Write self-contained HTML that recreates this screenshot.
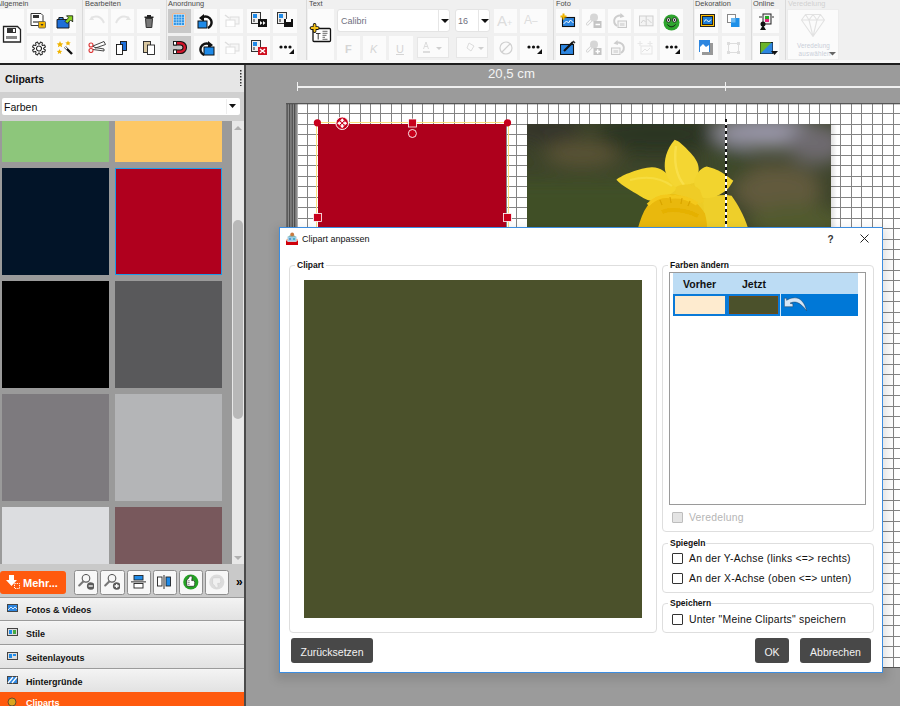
<!DOCTYPE html>
<html><head><meta charset="utf-8"><style>
html,body{margin:0;padding:0;}
body{width:900px;height:706px;overflow:hidden;position:relative;font-family:"Liberation Sans", sans-serif;background:#9b9b9b;}
div{box-sizing:border-box;}
.t{position:absolute;white-space:nowrap;line-height:1;}
</style></head><body>

<div style="position:absolute;left:0px;top:0px;width:900px;height:60px;background:#f0f0f0"></div>
<div style="position:absolute;left:0px;top:60px;width:900px;height:3px;background:#f7f7f7"></div>
<div style="position:absolute;left:0px;top:63px;width:900px;height:2px;background:#1e1e1e"></div>
<div style="position:absolute;left:82px;top:0px;width:1px;height:60px;background:#dadada"></div>
<div style="position:absolute;left:166px;top:0px;width:1px;height:60px;background:#dadada"></div>
<div style="position:absolute;left:306px;top:0px;width:1px;height:60px;background:#dadada"></div>
<div style="position:absolute;left:553px;top:0px;width:1px;height:60px;background:#dadada"></div>
<div style="position:absolute;left:693px;top:0px;width:1px;height:60px;background:#dadada"></div>
<div style="position:absolute;left:751px;top:0px;width:1px;height:60px;background:#dadada"></div>
<div style="position:absolute;left:785px;top:0px;width:1px;height:60px;background:#dadada"></div>
<div class="t" style="left:-4px;top:-0.2px;font-size:7.4px;color:#4a4a4a">Allgemein</div>
<div class="t" style="left:85px;top:-0.2px;font-size:7.4px;color:#4a4a4a">Bearbeiten</div>
<div class="t" style="left:168px;top:-0.2px;font-size:7.4px;color:#4a4a4a">Anordnung</div>
<div class="t" style="left:309px;top:-0.2px;font-size:7.4px;color:#4a4a4a">Text</div>
<div class="t" style="left:556px;top:-0.2px;font-size:7.4px;color:#4a4a4a">Foto</div>
<div class="t" style="left:695px;top:-0.2px;font-size:7.4px;color:#4a4a4a">Dekoration</div>
<div class="t" style="left:753px;top:-0.2px;font-size:7.4px;color:#4a4a4a">Online</div>
<div class="t" style="left:788px;top:-0.2px;font-size:7.4px;color:#d0d0d0">Veredelung</div>
<div style="position:absolute;left:0px;top:9px;width:24px;height:51px;background:#fbfbfb"></div>
<div style="position:absolute;left:27px;top:9px;width:23px;height:24px;background:#fbfbfb"></div>
<div style="position:absolute;left:27px;top:36px;width:23px;height:24px;background:#fbfbfb"></div>
<div style="position:absolute;left:53px;top:9px;width:23px;height:24px;background:#fbfbfb"></div>
<div style="position:absolute;left:53px;top:36px;width:23px;height:24px;background:#fbfbfb"></div>
<div style="position:absolute;left:85px;top:9px;width:23px;height:24px;background:#fbfbfb"></div>
<div style="position:absolute;left:85px;top:36px;width:23px;height:24px;background:#fbfbfb"></div>
<div style="position:absolute;left:111px;top:9px;width:23px;height:24px;background:#fbfbfb"></div>
<div style="position:absolute;left:111px;top:36px;width:23px;height:24px;background:#fbfbfb"></div>
<div style="position:absolute;left:137px;top:9px;width:23px;height:24px;background:#fbfbfb"></div>
<div style="position:absolute;left:137px;top:36px;width:23px;height:24px;background:#fbfbfb"></div>
<div style="position:absolute;left:168px;top:9px;width:23px;height:24px;background:#c8c8c8"></div>
<div style="position:absolute;left:168px;top:36px;width:23px;height:24px;background:#c8c8c8"></div>
<div style="position:absolute;left:194px;top:9px;width:23px;height:24px;background:#fbfbfb"></div>
<div style="position:absolute;left:194px;top:36px;width:23px;height:24px;background:#fbfbfb"></div>
<div style="position:absolute;left:220px;top:9px;width:23px;height:24px;background:#fbfbfb"></div>
<div style="position:absolute;left:220px;top:36px;width:23px;height:24px;background:#fbfbfb"></div>
<div style="position:absolute;left:247px;top:9px;width:23px;height:24px;background:#fbfbfb"></div>
<div style="position:absolute;left:247px;top:36px;width:23px;height:24px;background:#fbfbfb"></div>
<div style="position:absolute;left:273px;top:9px;width:24px;height:24px;background:#fbfbfb"></div>
<div style="position:absolute;left:273px;top:36px;width:24px;height:24px;background:#fbfbfb"></div>
<div style="position:absolute;left:308px;top:9px;width:26px;height:51px;background:#fbfbfb"></div>
<div style="position:absolute;left:337px;top:9px;width:113px;height:23px;background:#fff;border:1px solid #e4e4e4;border-radius:3px"></div>
<div style="position:absolute;left:438px;top:10px;width:1px;height:21px;background:#e6e6e6"></div>
<div class="t" style="left:341px;top:17px;font-size:9px;color:#6f7080">Calibri</div>
<div style="position:absolute;left:455px;top:9px;width:35px;height:23px;background:#fff;border:1px solid #e4e4e4;border-radius:3px"></div>
<div style="position:absolute;left:478px;top:10px;width:1px;height:21px;background:#e6e6e6"></div>
<div class="t" style="left:458px;top:17px;font-size:9px;color:#6f7080">16</div>
<div style="position:absolute;left:494px;top:9px;width:23px;height:24px;background:#fbfbfb"></div>
<div style="position:absolute;left:494px;top:36px;width:23px;height:24px;background:#fbfbfb"></div>
<div style="position:absolute;left:520px;top:9px;width:27px;height:24px;background:#fbfbfb"></div>
<div style="position:absolute;left:520px;top:36px;width:27px;height:24px;background:#fbfbfb"></div>
<div style="position:absolute;left:337px;top:36px;width:23px;height:24px;background:#fbfbfb"></div>
<div style="position:absolute;left:363px;top:36px;width:23px;height:24px;background:#fbfbfb"></div>
<div style="position:absolute;left:389px;top:36px;width:24px;height:24px;background:#fbfbfb"></div>
<div style="position:absolute;left:417px;top:37px;width:32px;height:21px;background:#fbfbfb;border:1px solid #e6e6e6"></div>
<div style="position:absolute;left:456px;top:37px;width:32px;height:21px;background:#fbfbfb;border:1px solid #e6e6e6"></div>
<div style="position:absolute;left:556px;top:9px;width:23px;height:24px;background:#fbfbfb"></div>
<div style="position:absolute;left:556px;top:36px;width:23px;height:24px;background:#fbfbfb"></div>
<div style="position:absolute;left:582px;top:9px;width:23px;height:24px;background:#fbfbfb"></div>
<div style="position:absolute;left:582px;top:36px;width:23px;height:24px;background:#fbfbfb"></div>
<div style="position:absolute;left:608px;top:9px;width:23px;height:24px;background:#fbfbfb"></div>
<div style="position:absolute;left:608px;top:36px;width:23px;height:24px;background:#fbfbfb"></div>
<div style="position:absolute;left:634px;top:9px;width:23px;height:24px;background:#fbfbfb"></div>
<div style="position:absolute;left:634px;top:36px;width:23px;height:24px;background:#fbfbfb"></div>
<div style="position:absolute;left:660px;top:9px;width:23px;height:24px;background:#fbfbfb"></div>
<div style="position:absolute;left:660px;top:36px;width:23px;height:24px;background:#fbfbfb"></div>
<div style="position:absolute;left:695px;top:9px;width:23px;height:24px;background:#fbfbfb"></div>
<div style="position:absolute;left:695px;top:36px;width:23px;height:24px;background:#fbfbfb"></div>
<div style="position:absolute;left:722px;top:9px;width:23px;height:24px;background:#fbfbfb"></div>
<div style="position:absolute;left:722px;top:36px;width:23px;height:24px;background:#fbfbfb"></div>
<div style="position:absolute;left:753px;top:9px;width:26px;height:24px;background:#fbfbfb"></div>
<div style="position:absolute;left:753px;top:36px;width:26px;height:24px;background:#fbfbfb"></div>
<div style="position:absolute;left:787px;top:9px;width:52px;height:51px;background:#fbfbfb;border:1px solid #ececec"></div>
<svg style="position:absolute;left:2px;top:24px;" width="20" height="20" viewBox="0 0 20 20"><path d="M1.5 2.5h14l3 3v12.5h-17z" fill="#fff" stroke="#222" stroke-width="1.3"/><rect x="5" y="4" width="9" height="5" fill="#333"/><rect x="11" y="5" width="2" height="3" fill="#fff"/><rect x="4" y="12" width="11" height="3" fill="#888"/></svg>
<svg style="position:absolute;left:30px;top:12px;" width="18" height="19" viewBox="0 0 18 19"><path d="M1 1.5h10l2 2v10h-12z" fill="#fff" stroke="#333" stroke-width="1"/><rect x="3" y="3" width="6" height="3" fill="#333"/><rect x="3" y="9" width="7" height="2" fill="#888"/><rect x="8.5" y="9.5" width="7" height="6.5" rx="1" fill="#f2b400" stroke="#555" stroke-width="0.8"/><path d="M10.5 12h3l-1.5 2z" fill="#333"/></svg>
<svg style="position:absolute;left:56px;top:15px;" width="18" height="14" viewBox="0 0 18 14"><path d="M1 4.5h2v-2h4v2h6v8.5h-12z" fill="#1e6fd9" stroke="#111" stroke-width="0.9"/><path d="M3 2.5h4v2h-4z" fill="#3d8ae6" stroke="#111" stroke-width="0.8"/><path d="M10.5 0.8h6.2v6.2l-2-2-3.5 3.5-2.2-2.2 3.5-3.5z" fill="#8ad420" stroke="#111" stroke-width="0.8"/></svg>
<svg style="position:absolute;left:30px;top:40px;" width="18" height="17" viewBox="0 0 18 17"><g transform="translate(9,8.5) rotate(22.5)"><path d="M4.39 -1.36 L6.52 -1.05 L6.52 1.05 L4.39 1.36 L4.07 2.15 L5.35 3.86 L3.86 5.35 L2.15 4.07 L1.36 4.39 L1.05 6.52 L-1.05 6.52 L-1.36 4.39 L-2.15 4.07 L-3.86 5.35 L-5.35 3.86 L-4.07 2.15 L-4.39 1.36 L-6.52 1.05 L-6.52 -1.05 L-4.39 -1.36 L-4.07 -2.15 L-5.35 -3.86 L-3.86 -5.35 L-2.15 -4.07 L-1.36 -4.39 L-1.05 -6.52 L1.05 -6.52 L1.36 -4.39 L2.15 -4.07 L3.86 -5.35 L5.35 -3.86 L4.07 -2.15Z" fill="#fff" stroke="#222" stroke-width="1" stroke-linejoin="round"/><circle r="2.5" fill="#fff" stroke="#222" stroke-width="1"/></g></svg>
<svg style="position:absolute;left:56px;top:40px;" width="18" height="16" viewBox="0 0 18 16"><path d="M9 7l7 7" stroke="#111" stroke-width="2.4"/><path d="M9 7l2 2" stroke="#fff" stroke-width="1.2"/><path d="M4 1l1 2.2 2.3.3-1.7 1.5.5 2.3-2.1-1.2-2.1 1.2.5-2.3L0.7 3.5 3 3.2z" fill="#f0b400"/><path d="M12 0.5l.8 1.8 1.9.2-1.4 1.2.4 1.9-1.7-1-1.7 1 .4-1.9-1.4-1.2 1.9-.2z" fill="#f0b400"/><path d="M3.5 9l.8 1.8 1.9.2-1.4 1.2.4 1.9-1.7-1-1.7 1 .4-1.9-1.4-1.2 1.9-.2z" fill="#f0b400"/></svg>
<svg style="position:absolute;left:88px;top:14px;" width="18" height="12" viewBox="0 0 18 12"><path d="M3 4c5-3 10-2 13 5" fill="none" stroke="#e4e4e4" stroke-width="2"/><path d="M1 6l3-4 2 4z" fill="#e4e4e4"/></svg>
<svg style="position:absolute;left:114px;top:14px;" width="18" height="12" viewBox="0 0 18 12"><path d="M15 4c-5-3-10-2-13 5" fill="none" stroke="#e4e4e4" stroke-width="2"/><path d="M17 6l-3-4-2 4z" fill="#e4e4e4"/></svg>
<svg style="position:absolute;left:144px;top:15px;" width="10" height="13" viewBox="0 0 10 13"><rect x="0.5" y="1.5" width="9" height="1.5" fill="#222"/><rect x="3" y="0" width="4" height="2" fill="#222"/><path d="M1.5 3.5h7l-.7 9h-5.6z" fill="#777" stroke="#222" stroke-width="0.9"/></svg>
<svg style="position:absolute;left:88px;top:41px;" width="18" height="12" viewBox="0 0 18 12"><circle cx="3" cy="4" r="2" fill="none" stroke="#d33" stroke-width="1.1"/><circle cx="3" cy="9.5" r="2" fill="none" stroke="#d33" stroke-width="1.1"/><path d="M5 5l11-4.5 1.5 3-10 3.5zM5 8.5l11 1.5v-2l-9-1.5" fill="#fff" stroke="#333" stroke-width="0.9"/></svg>
<svg style="position:absolute;left:116px;top:41px;" width="12" height="14" viewBox="0 0 12 14"><rect x="4.5" y="0.5" width="6" height="9" fill="#1e6fd9" stroke="#111" stroke-width="0.9"/><rect x="0.5" y="3.5" width="6" height="10" fill="#fff" stroke="#111" stroke-width="0.9"/></svg>
<svg style="position:absolute;left:143px;top:41px;" width="12" height="14" viewBox="0 0 12 14"><rect x="0.5" y="0.5" width="7" height="11" fill="#d9c7a0" stroke="#222" stroke-width="0.9"/><rect x="4.5" y="4" width="7" height="9.5" fill="#fff" stroke="#222" stroke-width="0.9"/></svg>
<svg style="position:absolute;left:172px;top:13px;" width="14" height="14" viewBox="0 0 14 14"><rect x="0.5" y="0.5" width="13" height="13" rx="1.5" fill="#bfe0f8" stroke="#f0b890" stroke-width="1"/><rect x="1.8" y="1.8" width="2.1" height="2.1" fill="#2f95e6"/><rect x="1.8" y="4.5" width="2.1" height="2.1" fill="#2f95e6"/><rect x="1.8" y="7.2" width="2.1" height="2.1" fill="#2f95e6"/><rect x="1.8" y="9.900000000000002" width="2.1" height="2.1" fill="#2f95e6"/><rect x="4.5" y="1.8" width="2.1" height="2.1" fill="#2f95e6"/><rect x="4.5" y="4.5" width="2.1" height="2.1" fill="#2f95e6"/><rect x="4.5" y="7.2" width="2.1" height="2.1" fill="#2f95e6"/><rect x="4.5" y="9.900000000000002" width="2.1" height="2.1" fill="#2f95e6"/><rect x="7.2" y="1.8" width="2.1" height="2.1" fill="#2f95e6"/><rect x="7.2" y="4.5" width="2.1" height="2.1" fill="#2f95e6"/><rect x="7.2" y="7.2" width="2.1" height="2.1" fill="#2f95e6"/><rect x="7.2" y="9.900000000000002" width="2.1" height="2.1" fill="#2f95e6"/><rect x="9.900000000000002" y="1.8" width="2.1" height="2.1" fill="#2f95e6"/><rect x="9.900000000000002" y="4.5" width="2.1" height="2.1" fill="#2f95e6"/><rect x="9.900000000000002" y="7.2" width="2.1" height="2.1" fill="#2f95e6"/><rect x="9.900000000000002" y="9.900000000000002" width="2.1" height="2.1" fill="#2f95e6"/></svg>
<svg style="position:absolute;left:172px;top:40px;" width="16" height="15" viewBox="0 0 16 15"><path d="M2 1.5h6.5a6 6 0 0 1 0 12h-6.5v-3.5h6.5a2.5 2.5 0 0 0 0-5h-6.5z" fill="#d4142a" stroke="#111" stroke-width="1.1"/><rect x="1.5" y="1.5" width="3" height="3.5" fill="#fff" stroke="#111" stroke-width="0.9"/><rect x="1.5" y="10" width="3" height="3.5" fill="#fff" stroke="#111" stroke-width="0.9"/></svg>
<svg style="position:absolute;left:197px;top:14px;" width="18" height="15" viewBox="0 0 18 15"><path d="M6 3a6 6 0 1 1 5 11" fill="none" stroke="#111" stroke-width="2.4"/><path d="M2 4l5-4v8z" fill="#111"/><rect x="1" y="7" width="9" height="7" fill="#1e8ae8" stroke="#111" stroke-width="1"/></svg>
<svg style="position:absolute;left:197px;top:41px;" width="18" height="15" viewBox="0 0 18 15"><path d="M12 3a6 6 0 1 0 -5 11" fill="none" stroke="#111" stroke-width="2.4"/><path d="M16 4l-5-4v8z" fill="#111"/><rect x="7" y="6" width="10" height="8" fill="#1e8ae8" stroke="#111" stroke-width="1"/></svg>
<svg style="position:absolute;left:224px;top:14px;" width="16" height="13" viewBox="0 0 16 13"><rect x="6" y="3" width="9" height="7" fill="#f6f6f6" stroke="#ddd"/><rect x="2" y="6" width="9" height="7" fill="#fff" stroke="#ddd"/><path d="M1 1l4 3" stroke="#ddd" stroke-width="1.5"/></svg>
<svg style="position:absolute;left:224px;top:41px;" width="16" height="13" viewBox="0 0 16 13"><rect x="6" y="3" width="9" height="7" fill="#f6f6f6" stroke="#ddd"/><rect x="2" y="6" width="9" height="7" fill="#fff" stroke="#ddd"/><path d="M1 1l4 3" stroke="#ddd" stroke-width="1.5"/></svg>
<svg style="position:absolute;left:251px;top:12px;" width="16" height="16" viewBox="0 0 16 16"><rect x="0.5" y="0.5" width="9" height="11" fill="#eee" stroke="#333"/><rect x="2" y="2" width="4" height="4" fill="#1e8ae8"/><rect x="2" y="7" width="2" height="3" fill="#888"/><rect x="7" y="7" width="9" height="8" fill="#111"/><path d="M9 9v4l2.5-2zM12 9v4l2.5-2z" fill="#fff"/></svg>
<svg style="position:absolute;left:277px;top:12px;" width="16" height="16" viewBox="0 0 16 16"><rect x="0.5" y="0.5" width="9" height="11" fill="#eee" stroke="#333"/><rect x="2" y="2" width="4" height="4" fill="#1e8ae8"/><rect x="2" y="7" width="2" height="3" fill="#888"/><rect x="7" y="7" width="9" height="8" fill="#111"/><rect x="9" y="7" width="5" height="3" fill="#fff"/></svg>
<svg style="position:absolute;left:251px;top:40px;" width="16" height="16" viewBox="0 0 16 16"><rect x="0.5" y="0.5" width="9" height="11" fill="#eee" stroke="#333"/><rect x="2" y="2" width="4" height="4" fill="#1e8ae8"/><rect x="2" y="7" width="2" height="3" fill="#888"/><rect x="7" y="7" width="9" height="8" fill="#d01020"/><path d="M9 9l5 4M14 9l-5 4" stroke="#fff" stroke-width="1.5"/></svg>
<svg style="position:absolute;left:279px;top:44px;" width="16" height="10" viewBox="0 0 16 10"><circle cx="2" cy="3" r="1.6" fill="#111"/><circle cx="6.5" cy="3" r="1.6" fill="#111"/><circle cx="11" cy="3" r="1.6" fill="#111"/><path d="M15 5v5h-5z" fill="#111"/></svg>
<svg style="position:absolute;left:527px;top:44px;" width="16" height="10" viewBox="0 0 16 10"><circle cx="2" cy="3" r="1.6" fill="#111"/><circle cx="6.5" cy="3" r="1.6" fill="#111"/><circle cx="11" cy="3" r="1.6" fill="#111"/><path d="M15 5v5h-5z" fill="#111"/></svg>
<svg style="position:absolute;left:665px;top:44px;" width="16" height="10" viewBox="0 0 16 10"><circle cx="2" cy="3" r="1.6" fill="#111"/><circle cx="6.5" cy="3" r="1.6" fill="#111"/><circle cx="11" cy="3" r="1.6" fill="#111"/><path d="M15 5v5h-5z" fill="#111"/></svg>
<svg style="position:absolute;left:309px;top:23px;" width="24" height="20" viewBox="0 0 24 20"><rect x="4" y="5.5" width="17.5" height="13" rx="1" fill="#fff" stroke="#111" stroke-width="1.3"/><path d="M7 10.5h4.5M9.2 10.5v6" stroke="#222" stroke-width="0.9"/><path d="M13.5 8.3h5M13.5 10.3h5M13.5 12.3h4M13.5 14.3h2.5M13.5 16.3h5" stroke="#444" stroke-width="0.8"/><path d="M5.6 1.9v6.4M2.4 5.1h6.4" stroke="#111" stroke-width="3.6" stroke-linecap="round"/><path d="M5.6 2.1v6M2.6 5.1h6" stroke="#f5c21a" stroke-width="2" stroke-linecap="round"/></svg>
<svg style="position:absolute;left:441px;top:18.5px;" width="8" height="5" viewBox="0 0 8 5"><path d="M0 0h8l-4 4z" fill="#111"/></svg>
<svg style="position:absolute;left:481px;top:18.5px;" width="8" height="5" viewBox="0 0 8 5"><path d="M0 0h8l-4 4z" fill="#111"/></svg>
<div class="t" style="left:497px;top:13px;font-size:15px;color:#ddd">A<span style="font-size:9px">+</span></div>
<div class="t" style="left:524px;top:14px;font-size:12px;color:#ddd">A<span style="font-size:10px">&#8211;</span></div>
<div class="t" style="left:345px;top:43.5px;font-size:11px;font-weight:bold;color:#d5d5d5">F</div>
<div class="t" style="left:370px;top:43.5px;font-size:11px;font-style:italic;color:#d5d5d5">K</div>
<div class="t" style="left:396px;top:43.5px;font-size:11px;text-decoration:underline;color:#d5d5d5">U</div>
<svg style="position:absolute;left:423px;top:41px;" width="26" height="14" viewBox="0 0 26 14"><path d="M3 1l-2.5 7M3 1l2.5 7M1.5 5.5h3" stroke="#d8d8d8" stroke-width="0.9" fill="none"/><rect x="0" y="10" width="7" height="2" fill="#ddd"/><path d="M13 6h6l-3 3z" fill="#cfcfcf"/></svg>
<svg style="position:absolute;left:466px;top:41px;" width="20" height="14" viewBox="0 0 20 14"><path d="M3 2l5 3-3 5-4-3z" fill="none" stroke="#dcdcdc" stroke-width="1"/><path d="M12 6h6l-3 3z" fill="#cfcfcf"/></svg>
<svg style="position:absolute;left:499px;top:41px;" width="14" height="14" viewBox="0 0 14 14"><circle cx="7" cy="7" r="6" fill="none" stroke="#d0d0d0" stroke-width="1.2"/><path d="M3 11l8-8" stroke="#d0d0d0" stroke-width="1.2"/></svg>
<svg style="position:absolute;left:560px;top:13px;" width="16" height="15" viewBox="0 0 16 15"><rect x="2.5" y="4.5" width="12" height="9" fill="#2d86e0" stroke="#111" stroke-width="1.1"/><path d="M3.5 11l3-3 2 2 2-3 3 3" stroke="#fff" stroke-width="1" fill="none"/><path d="M3.5 0.5v6M0.5 3.5h6" stroke="#f0b400" stroke-width="2"/></svg>
<svg style="position:absolute;left:560px;top:40px;" width="16" height="15" viewBox="0 0 16 15"><rect x="0.5" y="4.5" width="13" height="10" fill="#2d86e0" stroke="#111" stroke-width="1.1"/><path d="M4 11l9-9" stroke="#111" stroke-width="2.2"/><path d="M13 1l2 2" stroke="#333" stroke-width="1.4"/></svg>
<svg style="position:absolute;left:585px;top:13px;" width="18" height="17" viewBox="0 0 18 17"><path d="M6 7.5l-3.5 3.5" stroke="#cfcfcf" stroke-width="3" stroke-linecap="round"/><path d="M6 7.5l-3.5 3.5" stroke="#fafafa" stroke-width="1.6" stroke-linecap="round"/><circle cx="9" cy="4.5" r="4" fill="#d6d6d6"/><rect x="8.5" y="8" width="8" height="7" fill="#c4c4c4"/><path d="M10.5 11.5h4.5" stroke="#fff" stroke-width="1.5"/></svg>
<svg style="position:absolute;left:585px;top:40px;" width="18" height="17" viewBox="0 0 18 17"><path d="M6 7.5l-3.5 3.5" stroke="#cfcfcf" stroke-width="3" stroke-linecap="round"/><path d="M6 7.5l-3.5 3.5" stroke="#fafafa" stroke-width="1.6" stroke-linecap="round"/><circle cx="9" cy="4.5" r="4" fill="#d6d6d6"/><rect x="8.5" y="8" width="8" height="7" fill="#c4c4c4"/><path d="M12.7 9.2v4.6M10.5 11.5h4.5" stroke="#fff" stroke-width="1.5"/></svg>
<svg style="position:absolute;left:610px;top:12px;" width="18" height="18" viewBox="0 0 18 18"><path d="M12.5 4.2A5.5 5.5 0 1 0 7 14" fill="none" stroke="#cdcdcd" stroke-width="2"/><path d="M10.5 1l4 3.5-4.5 1.5z" fill="#cdcdcd"/><rect x="8" y="9" width="8.5" height="6.5" fill="#f4f4f4" stroke="#c8c8c8" stroke-width="1"/><rect x="10" y="11" width="4.5" height="3" fill="#ddd"/></svg>
<svg style="position:absolute;left:610px;top:39px;" width="18" height="18" viewBox="0 0 18 18"><path d="M5.5 4.2A5.5 5.5 0 1 1 11 14" fill="none" stroke="#cdcdcd" stroke-width="2"/><path d="M7.5 1l-4 3.5 4.5 1.5z" fill="#cdcdcd"/><rect x="1.5" y="9" width="8.5" height="6.5" fill="#f4f4f4" stroke="#c8c8c8" stroke-width="1"/><rect x="3.5" y="11" width="4.5" height="3" fill="#ddd"/></svg>
<svg style="position:absolute;left:638px;top:15px;" width="16" height="12" viewBox="0 0 16 12"><rect x="1.5" y="1" width="13.5" height="9.8" fill="#f4f4f4" stroke="#cfcfcf" stroke-width="1"/><path d="M8.2 1v9.8" stroke="#cfcfcf"/><path d="M3 8l2.5-3 2 2M9.5 4l4 4" stroke="#d2d2d2" fill="none"/></svg>
<svg style="position:absolute;left:637px;top:40px;" width="17" height="16" viewBox="0 0 17 16"><path d="M3 1v5M0.5 3.5h5M13 1v5M10.5 3.5h5" stroke="#e8e8e8" stroke-width="1.2"/><rect x="4" y="6" width="11" height="8" fill="none" stroke="#e6e6e6"/><path d="M5 12l3-3 2 2 3-3" stroke="#e4e4e4" fill="none"/></svg>
<svg style="position:absolute;left:663px;top:14px;" width="17" height="17" viewBox="0 0 17 17"><circle cx="8.5" cy="8.5" r="8" fill="#2ea52e"/><circle cx="5.5" cy="6" r="2.2" fill="#fff" stroke="#111" stroke-width="0.8"/><circle cx="11.5" cy="6" r="2.2" fill="#fff" stroke="#111" stroke-width="0.8"/><circle cx="5.5" cy="6" r="0.9" fill="#111"/><circle cx="11.5" cy="6" r="0.9" fill="#111"/><path d="M4.5 10.5c2 3 6 3 8 0" stroke="#111" stroke-width="1" fill="none"/></svg>
<svg style="position:absolute;left:700px;top:14px;" width="16" height="14" viewBox="0 0 16 14"><rect x="0.5" y="0.5" width="14" height="12" fill="#ffbf00" stroke="#222" stroke-width="1"/><rect x="2.5" y="2.5" width="10" height="8" fill="#1e7fd8" stroke="#222" stroke-width="1"/><path d="M4 7.5l2.2-2 2.5 2.5 2.3-2.5" stroke="#fff" stroke-width="1" fill="none"/></svg>
<svg style="position:absolute;left:726px;top:13px;" width="16" height="16" viewBox="0 0 16 16"><rect x="1.5" y="1.5" width="8" height="8" fill="#fff" stroke="#888"/><rect x="5" y="5" width="8.5" height="9" fill="#1e90e8"/><rect x="5" y="5" width="4.5" height="4.5" fill="#6cb8f0"/></svg>
<svg style="position:absolute;left:699px;top:40px;" width="14" height="15" viewBox="0 0 14 15"><rect x="3" y="3" width="11" height="12" fill="#999"/><rect x="0" y="0" width="11" height="12" fill="#2d86e0"/><path d="M1 7l3-3 3 3 3-2v7h-9z" fill="#fff"/></svg>
<svg style="position:absolute;left:726px;top:41px;" width="15" height="14" viewBox="0 0 15 14"><rect x="2.5" y="2.5" width="10" height="9" fill="none" stroke="#ddd"/><g fill="#ddd"><rect x="1" y="1" width="3" height="3"/><rect x="11" y="1" width="3" height="3"/><rect x="1" y="10" width="3" height="3"/><rect x="11" y="10" width="3" height="3"/></g></svg>
<svg style="position:absolute;left:758px;top:13px;" width="16" height="18" viewBox="0 0 16 18"><rect x="5" y="1" width="8" height="10" fill="#eee" stroke="#222"/><rect x="7" y="3" width="4" height="3" fill="#2a2"/><rect x="7" y="6" width="4" height="3" fill="#e2237a"/><circle cx="5" cy="11" r="2.5" fill="#111"/><path d="M2 17l3-5 3 5z" fill="#111"/><path d="M1 4h3M14 4h2" stroke="#333" stroke-width="1.2"/></svg>
<svg style="position:absolute;left:760px;top:42px;" width="18" height="15" viewBox="0 0 18 15"><rect x="0.5" y="0.5" width="12" height="11" fill="#2d86e0" stroke="#111"/><path d="M0.5 11.5l12-11v11z" fill="#2d86e0"/><path d="M0.5 0.5h11l-11 11z" fill="#6ab42a"/><path d="M11 9h7l-3.5 4z" fill="#111"/></svg>
<svg style="position:absolute;left:800px;top:13px;" width="26" height="25" viewBox="0 0 26 25"><path d="M5.5 1.5h15l4 5.5-11.5 16.5-11.5-16.5z M1.5 7h23 M5.5 1.5l3.5 5.5 4-5.5 4 5.5 3.5-5.5 M9 7l4 16.5 4-16.5" fill="none" stroke="#e2e2e2" stroke-width="1.1" stroke-linejoin="round"/></svg>
<div class="t" style="left:797px;top:42.8px;font-size:6.3px;letter-spacing:0.1px;color:#c9ced8">Veredelung</div>
<div class="t" style="left:798.5px;top:51px;font-size:6.3px;letter-spacing:0.25px;color:#c9ced8">auswählen</div>
<svg style="position:absolute;left:829px;top:52px;" width="7" height="4" viewBox="0 0 7 4"><path d="M0 0h7l-3.5 3.5z" fill="#666"/></svg>
<div style="position:absolute;left:0px;top:65px;width:244px;height:27px;background:#e6e6e6"></div>
<div class="t" style="left:5px;top:74.3px;font-size:10.5px;font-weight:bold;color:#111">Cliparts</div>
<svg style="position:absolute;left:239px;top:70px;" width="4" height="16" viewBox="0 0 4 16"><rect x="1" y="0" width="1.5" height="1.5" fill="#333"/><rect x="1" y="3" width="1.5" height="1.5" fill="#333"/><rect x="1" y="6" width="1.5" height="1.5" fill="#333"/><rect x="1" y="9" width="1.5" height="1.5" fill="#333"/><rect x="1" y="12" width="1.5" height="1.5" fill="#333"/><rect x="1" y="15" width="1.5" height="1.5" fill="#333"/></svg>
<div style="position:absolute;left:0px;top:92px;width:244px;height:29px;background:#d0d0d0"></div>
<div style="position:absolute;left:2px;top:98px;width:238px;height:17px;background:#fff;border-radius:2px"></div>
<div style="position:absolute;left:226px;top:99px;width:1px;height:15px;background:#eee"></div>
<div class="t" style="left:4px;top:101.5px;font-size:10.5px;color:#111">Farben</div>
<svg style="position:absolute;left:229px;top:104px;" width="7" height="4" viewBox="0 0 7 4"><path d="M0 0h7l-3.5 4z" fill="#111"/></svg>
<div style="position:absolute;left:0px;top:121px;width:232px;height:443px;background:#9a9a9a;overflow:hidden"></div>
<div style="position:absolute;left:2px;top:121px;width:107px;height:40.5px;background:#8dc67b;"></div>
<div style="position:absolute;left:115px;top:121px;width:107px;height:40.5px;background:#fdc865;"></div>
<div style="position:absolute;left:2px;top:168px;width:107px;height:107px;background:#021428;"></div>
<div style="position:absolute;left:115px;top:168px;width:107px;height:107px;background:#b0001e;border:1.5px solid #1e9be8;"></div>
<div style="position:absolute;left:2px;top:280.5px;width:107px;height:107.0px;background:#000000;"></div>
<div style="position:absolute;left:115px;top:280.5px;width:107px;height:107.0px;background:#59595b;"></div>
<div style="position:absolute;left:2px;top:393.5px;width:107px;height:107.0px;background:#7d7a7e;"></div>
<div style="position:absolute;left:115px;top:393.5px;width:107px;height:107.0px;background:#b4b5b7;"></div>
<div style="position:absolute;left:2px;top:507px;width:107px;height:57px;background:#dcdde0;"></div>
<div style="position:absolute;left:115px;top:507px;width:107px;height:57px;background:#78585c;"></div>
<div style="position:absolute;left:232px;top:121px;width:12px;height:443px;background:#e8e8e8"></div>
<div style="position:absolute;left:233px;top:220px;width:10px;height:199px;background:#b8b8b8;border-radius:5px"></div>
<svg style="position:absolute;left:234px;top:125px;" width="8" height="5" viewBox="0 0 8 5"><path d="M0 5l4-4 4 4z" fill="#b0b0b0"/></svg>
<svg style="position:absolute;left:234px;top:556px;" width="8" height="5" viewBox="0 0 8 5"><path d="M0 0l4 4 4-4z" fill="#b0b0b0"/></svg>
<div style="position:absolute;left:0px;top:564px;width:244px;height:34px;background:#c9c9c9"></div>
<div style="position:absolute;left:0px;top:571px;width:66px;height:23px;background:#ff5a0e;border-radius:3px"></div>
<svg style="position:absolute;left:6px;top:575px;" width="15" height="15" viewBox="0 0 15 15"><path d="M3 0h5v5h3l-5.5 6-5.5-6h3z" fill="#fff"/><rect x="8.5" y="8.5" width="5" height="5" fill="none" stroke="#fff" stroke-dasharray="1.2 1" stroke-width="1"/></svg>
<div class="t" style="left:23px;top:577.5px;font-size:11px;font-weight:bold;color:#fff">Mehr...</div>
<div style="position:absolute;left:73.5px;top:570px;width:24.5px;height:25px;background:#f7f7f7;border:1.5px solid #8e8e8e;border-radius:2.5px"></div>
<div style="position:absolute;left:100px;top:570px;width:24.5px;height:25px;background:#f7f7f7;border:1.5px solid #8e8e8e;border-radius:2.5px"></div>
<div style="position:absolute;left:126.5px;top:570px;width:24.5px;height:25px;background:#f7f7f7;border:1.5px solid #8e8e8e;border-radius:2.5px"></div>
<div style="position:absolute;left:152.5px;top:570px;width:24.5px;height:25px;background:#f7f7f7;border:1.5px solid #8e8e8e;border-radius:2.5px"></div>
<div style="position:absolute;left:178.5px;top:570px;width:24.5px;height:25px;background:#f7f7f7;border:1.5px solid #8e8e8e;border-radius:2.5px"></div>
<div style="position:absolute;left:204.5px;top:570px;width:24.5px;height:25px;background:#f7f7f7;border:1.5px solid #8e8e8e;border-radius:2.5px"></div>
<svg style="position:absolute;left:78px;top:574px;" width="16" height="16" viewBox="0 0 16 16"><circle cx="8" cy="4.3" r="3.8" fill="none" stroke="#5a5a5a" stroke-width="1.1"/><path d="M5.2 7.5l-4 4" stroke="#777" stroke-width="2" stroke-linecap="round"/><circle cx="12.7" cy="12" r="3.8" fill="#5a5a5a"/><path d="M10.6 12h4.2" stroke="#fff" stroke-width="1.3"/></svg>
<svg style="position:absolute;left:104px;top:574px;" width="16" height="16" viewBox="0 0 16 16"><circle cx="8" cy="4.3" r="3.8" fill="none" stroke="#5a5a5a" stroke-width="1.1"/><path d="M5.2 7.5l-4 4" stroke="#777" stroke-width="2" stroke-linecap="round"/><circle cx="12.7" cy="12" r="3.8" fill="#5a5a5a"/><path d="M10.6 12h4.2M12.7 9.9v4.2" stroke="#fff" stroke-width="1.3"/></svg>
<svg style="position:absolute;left:131px;top:575px;" width="15" height="14" viewBox="0 0 15 14"><rect x="3" y="0.5" width="9" height="4.5" fill="#1e8ae8" stroke="#222" stroke-width="0.9"/><rect x="3" y="8.5" width="9" height="4.5" fill="#fff" stroke="#222" stroke-width="0.9"/><rect x="0" y="6" width="15" height="1.6" fill="#777"/></svg>
<svg style="position:absolute;left:157px;top:575px;" width="15" height="14" viewBox="0 0 15 14"><rect x="0.5" y="2" width="4.5" height="9" fill="#fff" stroke="#222" stroke-width="0.9"/><rect x="9" y="2" width="4.5" height="9" fill="#1e8ae8" stroke="#222" stroke-width="0.9"/><rect x="6.2" y="0" width="1.6" height="14" fill="#777"/></svg>
<svg style="position:absolute;left:182px;top:574px;" width="17" height="17" viewBox="0 0 17 17"><circle cx="8.8" cy="8" r="7.6" fill="#24a124"/><path d="M8.5 2.2c1.2-.4 1.8.6 1.6 1.8l-.4 2.6h1.8c.8 0 1.2.7.9 1.4.6.3.6 1.2 0 1.5.5.4.4 1.2-.2 1.5.3.6-.1 1.3-.8 1.3h-4.6c-.9 0-1.6-.3-2.2-.8v-5.5c1.2-.6 2.3-1.8 2.9-3.8z" fill="#fff" stroke="#222" stroke-width="0.7"/><path d="M5.6 6.8h2.2M5.6 8.6h2.2M5.6 10.4h2" stroke="#222" stroke-width="0.5"/></svg>
<svg style="position:absolute;left:208px;top:574px;" width="17" height="17" viewBox="0 0 17 17"><circle cx="8.8" cy="8" r="7.6" fill="#dcdcdc"/><g transform="translate(0,16) scale(1,-1)"><path d="M8.5 2.2c1.2-.4 1.8.6 1.6 1.8l-.4 2.6h1.8c.8 0 1.2.7.9 1.4.6.3.6 1.2 0 1.5.5.4.4 1.2-.2 1.5.3.6-.1 1.3-.8 1.3h-4.6c-.9 0-1.6-.3-2.2-.8v-5.5c1.2-.6 2.3-1.8 2.9-3.8z" fill="#f0f0f0" stroke="#cfcfcf" stroke-width="0.7"/></g></svg>
<div class="t" style="left:236px;top:576px;font-size:12px;font-weight:bold;color:#000">&#187;</div>
<div style="position:absolute;left:0px;top:597px;width:244px;height:1px;background:#f6f6f6"></div>
<div style="position:absolute;left:0px;top:598px;width:244px;height:22px;background:linear-gradient(#f3f3f3,#e2e2e2)"></div>
<div style="position:absolute;left:0px;top:620px;width:244px;height:2px;background:#9b9b9b"></div>
<div class="t" style="left:26px;top:606px;font-size:9px;font-weight:bold;color:#111">Fotos &amp; Videos</div>
<div style="position:absolute;left:0px;top:621px;width:244px;height:1px;background:#f6f6f6"></div>
<div style="position:absolute;left:0px;top:622px;width:244px;height:22px;background:linear-gradient(#f3f3f3,#e2e2e2)"></div>
<div style="position:absolute;left:0px;top:644px;width:244px;height:2px;background:#9b9b9b"></div>
<div class="t" style="left:26px;top:630px;font-size:9px;font-weight:bold;color:#111">Stile</div>
<div style="position:absolute;left:0px;top:645px;width:244px;height:1px;background:#f6f6f6"></div>
<div style="position:absolute;left:0px;top:646px;width:244px;height:22px;background:linear-gradient(#f3f3f3,#e2e2e2)"></div>
<div style="position:absolute;left:0px;top:668px;width:244px;height:2px;background:#9b9b9b"></div>
<div class="t" style="left:26px;top:654px;font-size:9px;font-weight:bold;color:#111">Seitenlayouts</div>
<div style="position:absolute;left:0px;top:669px;width:244px;height:1px;background:#f6f6f6"></div>
<div style="position:absolute;left:0px;top:670px;width:244px;height:22px;background:linear-gradient(#f3f3f3,#e2e2e2)"></div>
<div style="position:absolute;left:0px;top:692px;width:244px;height:2px;background:#9b9b9b"></div>
<div class="t" style="left:26px;top:678px;font-size:9px;font-weight:bold;color:#111">Hintergründe</div>
<div style="position:absolute;left:0px;top:597px;width:244px;height:1px;background:#9b9b9b"></div>
<svg style="position:absolute;left:7px;top:604px;" width="11" height="8" viewBox="0 0 11 8"><rect x="0.5" y="0.5" width="10" height="7" fill="#2d86e0" stroke="#444"/><path d="M1 6l3-3 2 2 2-2 2 2" stroke="#fff" fill="none" stroke-width="0.8"/></svg>
<svg style="position:absolute;left:7px;top:628px;" width="11" height="8" viewBox="0 0 11 8"><rect x="0.5" y="0.5" width="10" height="7" fill="#ddd" stroke="#444"/><rect x="2" y="2" width="3" height="4" fill="#1e8ae8"/><rect x="6" y="2" width="3" height="4" fill="#4a4"/></svg>
<svg style="position:absolute;left:7px;top:652px;" width="11" height="8" viewBox="0 0 11 8"><rect x="0.5" y="0.5" width="10" height="7" fill="#ddd" stroke="#444"/><rect x="2" y="2" width="3" height="4" fill="#1e8ae8"/><rect x="6" y="2" width="3" height="2" fill="#1e8ae8"/></svg>
<svg style="position:absolute;left:7px;top:676px;" width="11" height="8" viewBox="0 0 11 8"><rect x="0.5" y="0.5" width="10" height="7" fill="#2d86e0" stroke="#444"/><path d="M1 7l5-6M5 7l5-6" stroke="#fff" stroke-width="1.3"/></svg>
<div style="position:absolute;left:0px;top:692px;width:244px;height:14px;background:#ff5a0e"></div>
<svg style="position:absolute;left:6px;top:697px;" width="12" height="9" viewBox="0 0 12 9"><circle cx="6" cy="5" r="4" fill="#d9a520" stroke="#333" stroke-width="0.7"/></svg>
<div class="t" style="left:26px;top:699px;font-size:9px;font-weight:bold;color:#fff">Cliparts</div>
<div style="position:absolute;left:244px;top:65px;width:2px;height:641px;background:#4a4a4a"></div>
<div class="t" style="left:488px;top:67px;font-size:13.2px;color:#f4f4f4">20,5 cm</div>
<div style="position:absolute;left:297px;top:86px;width:603px;height:2px;background:#f0f0f0"></div>
<div style="position:absolute;left:297px;top:82px;width:1px;height:9px;background:#f0f0f0"></div>
<div style="position:absolute;left:725px;top:82px;width:1px;height:9px;background:#f0f0f0"></div>
<svg style="position:absolute;left:286px;top:103px;" width="614" height="565" viewBox="0 0 614 565"><rect x="0" y="0" width="614" height="565" fill="#fff"/><rect x="21" y="0" width="1" height="565" fill="#838383"/><rect x="32" y="0" width="1" height="565" fill="#838383"/><rect x="42" y="0" width="1" height="565" fill="#838383"/><rect x="53" y="0" width="1" height="565" fill="#838383"/><rect x="63" y="0" width="1" height="565" fill="#838383"/><rect x="74" y="0" width="1" height="565" fill="#838383"/><rect x="84" y="0" width="1" height="565" fill="#838383"/><rect x="94" y="0" width="1" height="565" fill="#838383"/><rect x="105" y="0" width="1" height="565" fill="#838383"/><rect x="115" y="0" width="1" height="565" fill="#838383"/><rect x="126" y="0" width="1" height="565" fill="#838383"/><rect x="136" y="0" width="1" height="565" fill="#838383"/><rect x="147" y="0" width="1" height="565" fill="#838383"/><rect x="157" y="0" width="1" height="565" fill="#838383"/><rect x="168" y="0" width="1" height="565" fill="#838383"/><rect x="178" y="0" width="1" height="565" fill="#838383"/><rect x="189" y="0" width="1" height="565" fill="#838383"/><rect x="199" y="0" width="1" height="565" fill="#838383"/><rect x="209" y="0" width="1" height="565" fill="#838383"/><rect x="220" y="0" width="1" height="565" fill="#838383"/><rect x="230" y="0" width="1" height="565" fill="#838383"/><rect x="241" y="0" width="1" height="565" fill="#838383"/><rect x="251" y="0" width="1" height="565" fill="#838383"/><rect x="262" y="0" width="1" height="565" fill="#838383"/><rect x="272" y="0" width="1" height="565" fill="#838383"/><rect x="283" y="0" width="1" height="565" fill="#838383"/><rect x="293" y="0" width="1" height="565" fill="#838383"/><rect x="303" y="0" width="1" height="565" fill="#838383"/><rect x="314" y="0" width="1" height="565" fill="#838383"/><rect x="324" y="0" width="1" height="565" fill="#838383"/><rect x="335" y="0" width="1" height="565" fill="#838383"/><rect x="345" y="0" width="1" height="565" fill="#838383"/><rect x="356" y="0" width="1" height="565" fill="#838383"/><rect x="366" y="0" width="1" height="565" fill="#838383"/><rect x="377" y="0" width="1" height="565" fill="#838383"/><rect x="387" y="0" width="1" height="565" fill="#838383"/><rect x="398" y="0" width="1" height="565" fill="#838383"/><rect x="408" y="0" width="1" height="565" fill="#838383"/><rect x="418" y="0" width="1" height="565" fill="#838383"/><rect x="429" y="0" width="1" height="565" fill="#838383"/><rect x="439" y="0" width="1" height="565" fill="#838383"/><rect x="450" y="0" width="1" height="565" fill="#838383"/><rect x="460" y="0" width="1" height="565" fill="#838383"/><rect x="471" y="0" width="1" height="565" fill="#838383"/><rect x="481" y="0" width="1" height="565" fill="#838383"/><rect x="492" y="0" width="1" height="565" fill="#838383"/><rect x="502" y="0" width="1" height="565" fill="#838383"/><rect x="512" y="0" width="1" height="565" fill="#838383"/><rect x="523" y="0" width="1" height="565" fill="#838383"/><rect x="533" y="0" width="1" height="565" fill="#838383"/><rect x="544" y="0" width="1" height="565" fill="#838383"/><rect x="554" y="0" width="1" height="565" fill="#838383"/><rect x="565" y="0" width="1" height="565" fill="#838383"/><rect x="575" y="0" width="1" height="565" fill="#838383"/><rect x="586" y="0" width="1" height="565" fill="#838383"/><rect x="596" y="0" width="1" height="565" fill="#838383"/><rect x="607" y="0" width="1" height="565" fill="#838383"/><rect x="11" y="10" width="603" height="1" fill="#838383"/><rect x="11" y="21" width="603" height="1" fill="#838383"/><rect x="11" y="31" width="603" height="1" fill="#838383"/><rect x="11" y="42" width="603" height="1" fill="#838383"/><rect x="11" y="52" width="603" height="1" fill="#838383"/><rect x="11" y="62" width="603" height="1" fill="#838383"/><rect x="11" y="73" width="603" height="1" fill="#838383"/><rect x="11" y="83" width="603" height="1" fill="#838383"/><rect x="11" y="94" width="603" height="1" fill="#838383"/><rect x="11" y="104" width="603" height="1" fill="#838383"/><rect x="11" y="115" width="603" height="1" fill="#838383"/><rect x="11" y="125" width="603" height="1" fill="#838383"/><rect x="11" y="136" width="603" height="1" fill="#838383"/><rect x="11" y="146" width="603" height="1" fill="#838383"/><rect x="11" y="156" width="603" height="1" fill="#838383"/><rect x="11" y="167" width="603" height="1" fill="#838383"/><rect x="11" y="177" width="603" height="1" fill="#838383"/><rect x="11" y="188" width="603" height="1" fill="#838383"/><rect x="11" y="198" width="603" height="1" fill="#838383"/><rect x="11" y="209" width="603" height="1" fill="#838383"/><rect x="11" y="219" width="603" height="1" fill="#838383"/><rect x="11" y="230" width="603" height="1" fill="#838383"/><rect x="11" y="240" width="603" height="1" fill="#838383"/><rect x="11" y="251" width="603" height="1" fill="#838383"/><rect x="11" y="261" width="603" height="1" fill="#838383"/><rect x="11" y="271" width="603" height="1" fill="#838383"/><rect x="11" y="282" width="603" height="1" fill="#838383"/><rect x="11" y="292" width="603" height="1" fill="#838383"/><rect x="11" y="303" width="603" height="1" fill="#838383"/><rect x="11" y="313" width="603" height="1" fill="#838383"/><rect x="11" y="324" width="603" height="1" fill="#838383"/><rect x="11" y="334" width="603" height="1" fill="#838383"/><rect x="11" y="345" width="603" height="1" fill="#838383"/><rect x="11" y="355" width="603" height="1" fill="#838383"/><rect x="11" y="365" width="603" height="1" fill="#838383"/><rect x="11" y="376" width="603" height="1" fill="#838383"/><rect x="11" y="386" width="603" height="1" fill="#838383"/><rect x="11" y="397" width="603" height="1" fill="#838383"/><rect x="11" y="407" width="603" height="1" fill="#838383"/><rect x="11" y="418" width="603" height="1" fill="#838383"/><rect x="11" y="428" width="603" height="1" fill="#838383"/><rect x="11" y="439" width="603" height="1" fill="#838383"/><rect x="11" y="449" width="603" height="1" fill="#838383"/><rect x="11" y="460" width="603" height="1" fill="#838383"/><rect x="11" y="470" width="603" height="1" fill="#838383"/><rect x="11" y="480" width="603" height="1" fill="#838383"/><rect x="11" y="491" width="603" height="1" fill="#838383"/><rect x="11" y="501" width="603" height="1" fill="#838383"/><rect x="11" y="512" width="603" height="1" fill="#838383"/><rect x="11" y="522" width="603" height="1" fill="#838383"/><rect x="11" y="533" width="603" height="1" fill="#838383"/><rect x="11" y="543" width="603" height="1" fill="#838383"/><rect x="11" y="554" width="603" height="1" fill="#838383"/><rect x="11" y="564" width="603" height="1" fill="#838383"/><rect x="0" y="0" width="11.5" height="565" fill="#8a8a8a"/><rect x="0.6" y="0" width="1" height="565" fill="#404040"/><rect x="3.2" y="0" width="1" height="565" fill="#404040"/><rect x="5.7" y="0" width="1" height="565" fill="#404040"/><rect x="8.2" y="0" width="1" height="565" fill="#404040"/><rect x="11" y="0" width="1" height="565" fill="#b0b0b0"/><rect x="0" y="-0.3" width="614" height="1.6" fill="#555"/><rect x="0" y="564" width="614" height="1" fill="#555"/></svg>
<div style="position:absolute;left:316.3px;top:121.6px;width:192.4px;height:111.4px;border:1.9px solid #f9e07e;border-bottom:none"></div>
<div style="position:absolute;left:318px;top:124px;width:188px;height:109px;background:#ae001c"></div>
<svg style="position:absolute;left:310px;top:115px;" width="210" height="120" viewBox="0 0 210 120"><circle cx="7.4" cy="7.8" r="3.6" fill="#c8001c"/><circle cx="197.5" cy="7.8" r="3.6" fill="#c8001c"/><rect x="98.5" y="4" width="8" height="8" fill="#c8001c" stroke="#fff" stroke-width="0.8"/><circle cx="102.4" cy="18.5" r="4" fill="#c8001c" stroke="#fff" stroke-width="0.9"/><circle cx="32.2" cy="8.2" r="6.3" fill="#c8001c" stroke="#fff" stroke-width="1"/><path d="M32.2 3.2l2.3 2.6h-1.4v1.5h-1.8v-1.5h-1.4zM32.2 13.2l2.3-2.6h-1.4v-1.5h-1.8v1.5h-1.4zM27.2 8.2l2.6-2.3v1.4h1.5v1.8h-1.5v1.4zM37.2 8.2l-2.6-2.3v1.4h-1.5v1.8h1.5v1.4z" fill="#fff"/><circle cx="32.2" cy="8.2" r="1.1" fill="#c8001c"/><rect x="3.5" y="98.5" width="8" height="8" fill="#c8001c" stroke="#fff" stroke-width="0.8"/><rect x="193.5" y="98.5" width="8" height="8" fill="#c8001c" stroke="#fff" stroke-width="0.8"/></svg>
<svg style="position:absolute;left:527px;top:124px;" width="304" height="110" viewBox="0 0 304 110"><defs>
<filter id="bl" x="-50%" y="-50%" width="200%" height="200%"><feGaussianBlur stdDeviation="9"/></filter>
<filter id="bl2" x="-20%" y="-20%" width="140%" height="140%"><feGaussianBlur stdDeviation="0.6"/></filter>
<clipPath id="pc"><rect width="304" height="110"/></clipPath>
</defs>
<g clip-path="url(#pc)">
<rect width="304" height="110" fill="#3c4329"/>
<g filter="url(#bl)">
<rect x="-20" y="55" width="200" height="75" fill="#404f27"/>
<ellipse cx="55" cy="30" rx="38" ry="13" fill="#5a5236"/>
<ellipse cx="15" cy="5" rx="40" ry="15" fill="#34352b"/>
<ellipse cx="130" cy="10" rx="60" ry="20" fill="#2c3424"/>
<ellipse cx="240" cy="8" rx="55" ry="16" fill="#9794a6"/>
<ellipse cx="290" cy="20" rx="30" ry="20" fill="#6e6a70"/>
<ellipse cx="250" cy="65" rx="45" ry="25" fill="#625a3c"/>
<ellipse cx="270" cy="100" rx="50" ry="20" fill="#515a2e"/>
<ellipse cx="200" cy="40" rx="25" ry="20" fill="#3d4a2c"/>
</g>
<g filter="url(#bl2)" transform="translate(-527,-124)">
<path d="M667 175 L698 172 L712 196 L705 214 L648 206 L655 195z" fill="#eccb26"/>
<!-- lower right petal -->
<path d="M703 199 C712 196 724 194 731.6 195.8 C738 205 744 215 748 228 L706 228 C705 218 703 208 703 199z" fill="#eecf2a"/>
<!-- left petal -->
<path d="M616.4 179.8 C622 175 640 168 651.6 167.3 C660 167 667 172 671 179.8 L677 189 C668 196 664 201 658.7 201.1 C652 202 646 200 640 196 C632 191 622 186 616.4 179.8z" fill="#f3d42c"/>
<path d="M630 180 C645 176 660 177 672 186" stroke="#f8e250" stroke-width="2" fill="none" opacity="0.6"/>
<!-- top petal -->
<path d="M674.7 139.8 C679 141 684 146 690.7 153 C696 159 699 164 698.7 170 C698 176 697 180 696.9 182 L677 188 C671 184 667 178 665 170 C664 160 666 150 674.7 139.8z" fill="#f4d631"/>
<path d="M676 146 C674 160 676 175 684 185" stroke="#fbe45a" stroke-width="2.5" fill="none" opacity="0.6"/>
<!-- right petal -->
<path d="M706.7 166.4 C714 168 720 171 722.7 173 C727 176 731 179 733.3 180.7 C731 185 729 187 728 188.7 C722 194 716 197 710 198 C704 198 700 198 699.6 197.6 C696 190 694 185 694.2 181.6 C696 174 700 168 706.7 166.4z" fill="#f2d42e"/>
<!-- neck -->
<path d="M676 187 C684 183 694 184 700 190 L704 202 C694 206 682 204 674 198z" fill="#efcc25"/>
<!-- trumpet -->
<path d="M638 228 C640 220 643 212 647 206.4 C652 200 657 197 662.2 195.8 C670 194 676 194 680 195.8 C688 197 692 200 696 202.9 C700 206 703 210 704.9 213.6 C706 218 707 222 707 228z" fill="#e9b80a"/>
<path d="M648 205 C655 198 664 195 672 197 C680 196 690 199 697 204" stroke="#f4c91c" stroke-width="3.5" fill="none"/>
<path d="M660 200 l2 5 M670 197 l1 6 M682 198 l-1 6 M690 201 l-2 5" stroke="#d9a500" stroke-width="1.2"/>
<path d="M662 212 C670 208 686 210 698 216" stroke="#e2ac00" stroke-width="4" fill="none" opacity="0.6"/>
</g>
</g></svg>
<div style="position:absolute;left:725px;top:119px;width:2px;height:108px;background:repeating-linear-gradient(#111 0 3px,#fff 3px 6px)"></div>
<div style="position:absolute;left:831px;top:124px;width:6px;height:109px;background:linear-gradient(90deg,rgba(0,0,0,0.12),rgba(0,0,0,0))"></div>
<div style="position:absolute;left:276px;top:228px;width:612px;height:452px;background:rgba(0,0,0,0.10);filter:blur(4px)"></div>
<div style="position:absolute;left:279px;top:227px;width:604px;height:446px;background:#fff;border:1px solid #3c8de0"></div>
<svg style="position:absolute;left:285px;top:231px;" width="14" height="15" viewBox="0 0 14 15"><path d="M1 9.5h1.5v1.2h9v-1.2h1.5v4.5h-12z" fill="#d0000a"/><rect x="2.5" y="5.5" width="9" height="5" fill="#9ccce6"/><path d="M3 5.5l2-1h4l2 1" fill="#3c8a78"/><rect x="4" y="7" width="2" height="2" fill="#5a9ad0"/><rect x="8" y="7" width="2" height="2" fill="#4ab0c8"/><circle cx="7.2" cy="3.4" r="1.9" fill="#c87a40"/><circle cx="2.2" cy="8.6" r="0.8" fill="#e8b090"/><circle cx="12" cy="8.6" r="0.8" fill="#e8b090"/></svg>
<div class="t" style="left:302px;top:234.5px;font-size:9px;color:#111">Clipart anpassen</div>
<div class="t" style="left:827.5px;top:235px;font-size:10px;font-weight:bold;color:#333">?</div>
<svg style="position:absolute;left:860px;top:234px;" width="9" height="9" viewBox="0 0 9 9"><path d="M0.5 0.5l8 8M8.5 0.5l-8 8" stroke="#222" stroke-width="1"/></svg>
<div style="position:absolute;left:289px;top:265px;width:368px;height:368px;border:1px solid #dedede;border-radius:4px"></div>
<div style="position:absolute;left:295px;top:260px;width:31px;height:9px;background:#fff"></div>
<div class="t" style="left:297px;top:261.2px;font-size:8.5px;font-weight:bold;color:#111">Clipart</div>
<div style="position:absolute;left:304px;top:280px;width:338px;height:338px;background:#4b512b"></div>
<div style="position:absolute;left:662px;top:265px;width:212px;height:267px;border:1px solid #dedede;border-radius:4px"></div>
<div style="position:absolute;left:668px;top:260px;width:62px;height:9px;background:#fff"></div>
<div class="t" style="left:670px;top:261.2px;font-size:8.5px;font-weight:bold;color:#111">Farben ändern</div>
<div style="position:absolute;left:662px;top:543px;width:212px;height:50px;border:1px solid #dedede;border-radius:4px"></div>
<div style="position:absolute;left:668px;top:538px;width:38px;height:9px;background:#fff"></div>
<div class="t" style="left:670px;top:539.2px;font-size:8.5px;font-weight:bold;color:#111">Spiegeln</div>
<div style="position:absolute;left:662px;top:603px;width:212px;height:30px;border:1px solid #dedede;border-radius:4px"></div>
<div style="position:absolute;left:668px;top:598px;width:43px;height:9px;background:#fff"></div>
<div class="t" style="left:670px;top:599.2px;font-size:8.5px;font-weight:bold;color:#111">Speichern</div>
<div style="position:absolute;left:669px;top:272px;width:197px;height:233px;border:1px solid #9a9a9a;background:#fff"></div>
<div style="position:absolute;left:673px;top:273px;width:185px;height:20px;background:#bcdcf4"></div>
<div class="t" style="left:683px;top:279px;font-size:10.5px;font-weight:bold;color:#111">Vorher</div>
<div class="t" style="left:742px;top:279px;font-size:10.5px;font-weight:bold;color:#111">Jetzt</div>
<div style="position:absolute;left:673px;top:293px;width:185px;height:23px;background:#bcdcf4"></div>
<div style="position:absolute;left:781px;top:294px;width:77px;height:22px;background:#0078d7"></div>
<div style="position:absolute;left:673px;top:294px;width:54px;height:22px;background:#feebcf;border:2px solid #0a7ad8"></div>
<div style="position:absolute;left:727px;top:294px;width:53px;height:22px;background:#4b512b;border:2px solid #0a7ad8;box-shadow:inset 0 0 0 1px #6a4a18"></div>
<svg style="position:absolute;left:784px;top:297px;" width="24" height="16" viewBox="0 0 24 16"><path d="M0.4 1.2H2.6V3.3C6 1 10 0.4 13 1C17 1.8 21 6.5 22.7 13.9C19.5 9.5 16 6.2 12.5 5.3C10.5 4.8 8 5.1 6 6.2L8.9 6.9V9.7H0.4Z" fill="#d6e6f6" stroke="#1d3c5c" stroke-width="0.5" stroke-linejoin="round"/></svg>
<div style="position:absolute;left:780px;top:293px;width:1px;height:23px;background:#cfe6f8"></div>
<div style="position:absolute;left:672px;top:512px;width:11px;height:11px;background:#e4e4e4;border:1px solid #bdbdbd;border-radius:1px"></div>
<div class="t" style="left:689px;top:513.3px;font-size:10.4px;letter-spacing:0.22px;color:#b5b5b5">Veredelung</div>
<div style="position:absolute;left:672px;top:553px;width:11px;height:11px;background:#fff;border:1px solid #333;border-radius:1px"></div>
<div class="t" style="left:689px;top:554.3px;font-size:10.4px;letter-spacing:0.22px;color:#111">An der Y-Achse (links &lt;=&gt; rechts)</div>
<div style="position:absolute;left:672px;top:573px;width:11px;height:11px;background:#fff;border:1px solid #333;border-radius:1px"></div>
<div class="t" style="left:689px;top:574.3px;font-size:10.4px;letter-spacing:0.22px;color:#111">An der X-Achse (oben &lt;=&gt; unten)</div>
<div style="position:absolute;left:672px;top:614px;width:11px;height:11px;background:#fff;border:1px solid #333;border-radius:1px"></div>
<div class="t" style="left:689px;top:615.3px;font-size:10.4px;letter-spacing:0.22px;color:#111">Unter "Meine Cliparts" speichern</div>
<div style="position:absolute;left:291px;top:638px;width:82px;height:25px;background:#484848;border-radius:3px;color:#f2f2f2;font-size:10.5px;line-height:25px;padding-top:1.5px;text-align:center">Zurücksetzen</div>
<div style="position:absolute;left:755px;top:638px;width:34px;height:25px;background:#484848;border-radius:3px;color:#f2f2f2;font-size:10.5px;line-height:25px;padding-top:1.5px;text-align:center">OK</div>
<div style="position:absolute;left:800px;top:638px;width:71px;height:25px;background:#484848;border-radius:3px;color:#f2f2f2;font-size:10.5px;line-height:25px;padding-top:1.5px;text-align:center">Abbrechen</div>
</body></html>
